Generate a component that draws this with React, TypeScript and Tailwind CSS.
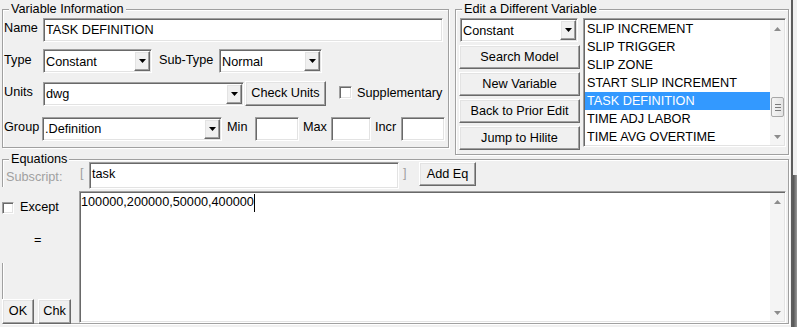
import React from 'react';

const group = 'border border-[#a0a0a0] shadow-[inset_1px_1px_0_#ffffff,1px_1px_0_#ffffff]';
const sunken = 'border border-t-[#a0a0a0] border-l-[#a0a0a0] border-r-white border-b-white shadow-[inset_1px_1px_0_#696969,inset_-1px_-1px_0_#e3e3e3] bg-white';
const raised = 'border border-t-white border-l-white border-r-[#696969] border-b-[#696969] shadow-[inset_-1px_-1px_0_#a0a0a0,inset_1px_1px_0_#e3e3e3] bg-[#f0f0f0]';

const Tri = ({ up = false, color = '#000' }: { up?: boolean; color?: string }) => (
  <svg width="7" height="4" viewBox="0 0 7 4">
    <polygon points={up ? '0,4 7,4 3.5,0' : '0,0 7,0 3.5,4'} fill={color} />
  </svg>
);

const Button = ({ label, className }: { label: string; className: string }) => (
  <div className={`${raised} ${className} flex items-center justify-center shrink-0`}>{label}</div>
);

const Select = ({ value, className, editable }: { value: string; className: string; editable?: boolean }) => (
  <div className={`${sunken} ${className} h-[24px] flex shrink-0`}>
    <div className={`flex-1 pl-[2px] ${editable ? 'pt-[4px]' : 'pt-[5px]'} whitespace-nowrap overflow-hidden`}>{value}</div>
    <div className={`${raised} w-[16px] my-[1px] mr-[1px] flex items-center justify-center`}>
      <Tri />
    </div>
  </div>
);

const Input = ({ value = '', className }: { value?: string; className: string }) => (
  <div className={`${sunken} ${className} shrink-0 pl-[2px] pt-[4px] whitespace-nowrap overflow-hidden`}>{value}</div>
);

const Check = ({ className = '' }: { className?: string }) => (
  <div className={`${sunken} ${className} shrink-0`} />
);

const ScrollBar = ({ thumbTop }: { thumbTop?: number }) => (
  <div className="w-[14px] bg-[#f4f4f4] flex flex-col">
    <div className="h-[17px] flex items-center justify-center">
      <Tri up color="#8c8c8c" />
    </div>
    <div className="flex-1 relative">
      {thumbTop !== undefined && (
        <div
          className="absolute left-[1px] w-[13px] h-[20px] rounded-[2px] border border-[#a8a8a8] bg-gradient-to-r from-[#f4f4f4] to-[#e4e4e4] flex flex-col items-center justify-center gap-[2px]"
          style={{ top: thumbTop }}
        >
          <div className="w-[6px] h-px bg-[#7a7a7a]" />
          <div className="w-[6px] h-px bg-[#7a7a7a]" />
          <div className="w-[6px] h-px bg-[#7a7a7a]" />
        </div>
      )}
    </div>
    <div className="h-[17px] flex items-center justify-center">
      <Tri color="#8c8c8c" />
    </div>
  </div>
);

const variables = [
  'SLIP INCREMENT',
  'SLIP TRIGGER',
  'SLIP ZONE',
  'START SLIP INCREMENT',
  'TASK DEFINITION',
  'TIME ADJ LABOR',
  'TIME AVG OVERTIME',
];

export default function App() {
  return (
    <div className="font-['Liberation_Sans',Arial,sans-serif] text-[12.7px] leading-[15px] text-black w-[797px] h-[327px] bg-[#f0f0f0] flex overflow-hidden">
      <div className="w-[789px] pl-[2px] pt-[2px] flex flex-col shrink-0">
        {/* top row */}
        <div className="flex h-[150px]">
          <fieldset className={`${group} w-[447px] h-[146px] shrink-0`}>
            <legend className="ml-[6px] px-[2px] bg-[#f0f0f0]">Variable Information</legend>

            <div className="flex mt-[1px]">
              <div className="w-[40px] pl-[1px] mt-[3px]">Name</div>
              <Input value="TASK DEFINITION" className="w-[400px] h-[24px]" />
            </div>

            <div className="flex mt-[7px]">
              <div className="w-[40px] pl-[1px] mt-[4px]">Type</div>
              <Select value="Constant" className="w-[109px]" />
              <div className="ml-[7px] w-[60px] mt-[4px]">Sub-Type</div>
              <Select value="Normal" className="w-[103px]" />
            </div>

            <div className="flex mt-[8px]">
              <div className="w-[40px] pl-[1px] mt-[4px]">Units</div>
              <Select value="dwg" editable className="w-[201px] mt-[1px]" />
              <Button label="Check Units" className="ml-[1px] w-[81px] h-[25px]" />
              <Check className="ml-[13px] mt-[5px] w-[13px] h-[13px]" />
              <div className="ml-[5px] mt-[5px]">Supplementary</div>
            </div>

            <div className="flex mt-[11px]">
              <div className="w-[39px] pl-[1px] mt-[3px]">Group</div>
              <Select value=".Definition" editable className="w-[180px]" />
              <div className="ml-[5px] w-[28px] mt-[3px]">Min</div>
              <Input className="w-[44px] h-[24px]" />
              <div className="ml-[4px] w-[28px] mt-[3px]">Max</div>
              <Input className="w-[40px] h-[24px]" />
              <div className="ml-[4px] w-[26px] mt-[3px]">Incr</div>
              <Input className="w-[44px] h-[24px]" />
            </div>
          </fieldset>

          <fieldset className={`${group} ml-[6px] w-[334px] h-[153px] shrink-0`}>
            <legend className="ml-[6px] px-[2px] bg-[#f0f0f0]">Edit a Different Variable</legend>
            <div className="flex mt-[1px]">
              <div className="ml-[3px] w-[121px] flex flex-col">
                <Select value="Constant" className="ml-[1px] w-[118px]" />
                <Button label="Search Model" className="mt-[3px] w-[121px] h-[24px]" />
                <Button label="New Variable" className="mt-[3px] w-[121px] h-[24px]" />
                <Button label="Back to Prior Edit" className="mt-[3px] w-[121px] h-[24px]" />
                <Button label="Jump to Hilite" className="mt-[3px] w-[121px] h-[24px]" />
              </div>
              <div className={`${sunken} ml-[3px] w-[203px] h-[129px] shrink-0 p-px flex`}>
                <div className="flex-1 overflow-hidden">
                  {variables.map((v) => (
                    <div
                      key={v}
                      className={`h-[18px] pt-[2px] pl-[2px] whitespace-nowrap ${
                        v === 'TASK DEFINITION' ? 'bg-[#3399ff] text-white' : ''
                      }`}
                    >
                      {v}
                    </div>
                  ))}
                </div>
                <ScrollBar thumbTop={60} />
              </div>
            </div>
          </fieldset>
        </div>

        {/* equations */}
        <fieldset className={`${group} w-[787px] h-[172px] shrink-0`}>
          <legend className="ml-[6px] px-[2px] bg-[#f0f0f0]">Equations</legend>
          <div className="flex -mt-[5px] h-[27px]">
            <div className="w-[77px] pl-[3px] mt-[8px] text-[#a0a0a0]">Subscript:</div>
            <div className="w-[9px] mt-[4px] text-[#a0a0a0]">[</div>
            <Input value="task" className="w-[310px] h-[27px]" />
            <div className="ml-[4px] w-[16px] mt-[4px] text-[#a0a0a0]">]</div>
            <Button label="Add Eq" className="w-[57px] h-[24px]" />
          </div>

          <div className="flex mt-[2px]">
            <div className="-ml-px w-[77px] h-[133px] flex flex-col shrink-0">
              <div className="bg-[#f0f0f0] -mt-[4px] h-[76px] pt-[15px]">
                <div className="flex items-start">
                  <Check className="w-[12px] h-[12px]" />
                  <div className="ml-[6px] -mt-[2px]">Except</div>
                </div>
                <div className="ml-[32px] mt-[18px]">=</div>
              </div>
              <div className="flex-1" />
              <div className="flex">
                <Button label="OK" className="w-[32px] h-[25px]" />
                <Button label="Chk" className="ml-[4px] w-[33px] h-[25px]" />
              </div>
            </div>
            <div className={`${sunken} w-[707px] h-[132px] shrink-0 p-px flex`}>
              <div className="flex-1 pt-[2px] flex items-start">
                <span>100000,200000,50000,400000</span>
                <div className="w-px h-[18px] bg-black -mt-[1px]" />
              </div>
              <ScrollBar />
            </div>
          </div>
        </fieldset>
      </div>

      {/* neighbouring window edge */}
      <div className="ml-[2px] w-[2px] bg-[#5d5d5d] shrink-0" />
      <div className="w-[4px] flex flex-col shrink-0">
        <div className="h-[175px]" />
        <div className="flex-1 bg-gradient-to-r from-[#505050] to-[#9a9a9a]" />
      </div>
    </div>
  );
}
